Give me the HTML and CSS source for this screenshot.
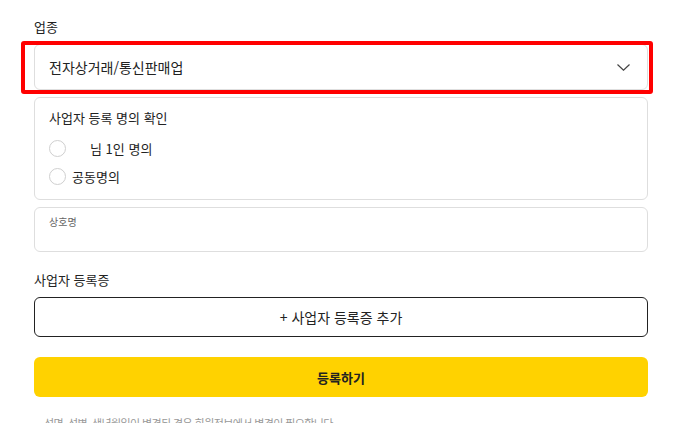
FILE: index.html
```html
<!DOCTYPE html>
<html lang="ko">
<head>
<meta charset="utf-8">
<link rel="stylesheet" href="styles.css">
</head>
<body>
<div class="page">
  <div class="label">업종</div>
  <div class="select">
    <span class="select-text">전자상거래/통신판매업</span>
    <svg class="chevron" width="13" height="7" viewBox="0 0 13 7"><path d="M0.5 0.5 L6.5 6.2 L12.5 0.5" fill="none" stroke="#444" stroke-width="1.2"/></svg>
    <div class="highlight"></div>
  </div>
  <div class="card owner">
    <div class="card-title">사업자 등록 명의 확인</div>
    <div class="radio-row"><span class="radio"></span><span class="masked"></span><span>님 1인 명의</span></div>
    <div class="radio-row"><span class="radio"></span><span>공동명의</span></div>
  </div>
  <div class="card company">
    <div class="small-label">상호명</div>
  </div>
  <div class="label section">사업자 등록증</div>
  <div class="btn-outline">+ 사업자 등록증 추가</div>
  <div class="btn-primary">등록하기</div>
  <div class="note">성명, 성별, 생년월일이 변경된 경우 회원정보에서 변경이 필요합니다.</div>
</div>
</body>
</html>
```

FILE: styles.css
```css
* { box-sizing: border-box; }
html, body { margin: 0; padding: 0; background: #fff; overflow: hidden; height: 423px; }
body { font-family: "Noto Sans CJK KR", "Noto Sans", sans-serif; color: #222; }
.page { padding: 18px 39px 0 34px; display: flex; flex-direction: column; }
.label { font-size: 13px; line-height: 18px; color: #222; }
.select {
  position: relative; margin-top: 8px; height: 46px;
  border: 1px solid #dedede; border-radius: 6px;
  display: flex; align-items: center; justify-content: space-between;
  padding: 0 17px 0 14px;
}
.select-text { font-size: 14px; color: #222; }
.chevron { display: block; }
.highlight {
  position: absolute; left: -14px; top: -4px; right: -6px; bottom: -5px;
  border: 4px solid #f00; border-radius: 3px; pointer-events: none;
}
.card { border: 1px solid #dedede; border-radius: 6px; margin-top: 7px; }
.owner { padding: 11px 14px 9px 14px; }
.card-title { font-size: 13px; line-height: 18px; margin-bottom: 7px; }
.radio-row { display: flex; align-items: center; height: 28px; font-size: 13px; }
.radio { width: 17px; height: 17px; border: 1px solid #cfcfcf; border-radius: 50%; margin-right: 6px; flex: none; }
.masked { width: 18px; flex: none; }
.company { height: 45px; padding: 7px 14px; }
.small-label { font-size: 10px; line-height: 14px; color: #666; }
.section { margin-top: 19px; }
.btn-outline {
  margin-top: 8px; height: 40px; border: 1px solid #222; border-radius: 6px;
  display: flex; align-items: center; justify-content: center; font-size: 14px;
}
.btn-primary {
  margin-top: 20px; height: 40px; background: #ffd200; border-radius: 6px;
  display: flex; align-items: center; justify-content: center; font-size: 13px; font-weight: 700;
}
.note { margin-top: 18px; padding-left: 10px; font-size: 11px; letter-spacing: -0.6px; color: #999; line-height: 16px; white-space: nowrap; }
```
